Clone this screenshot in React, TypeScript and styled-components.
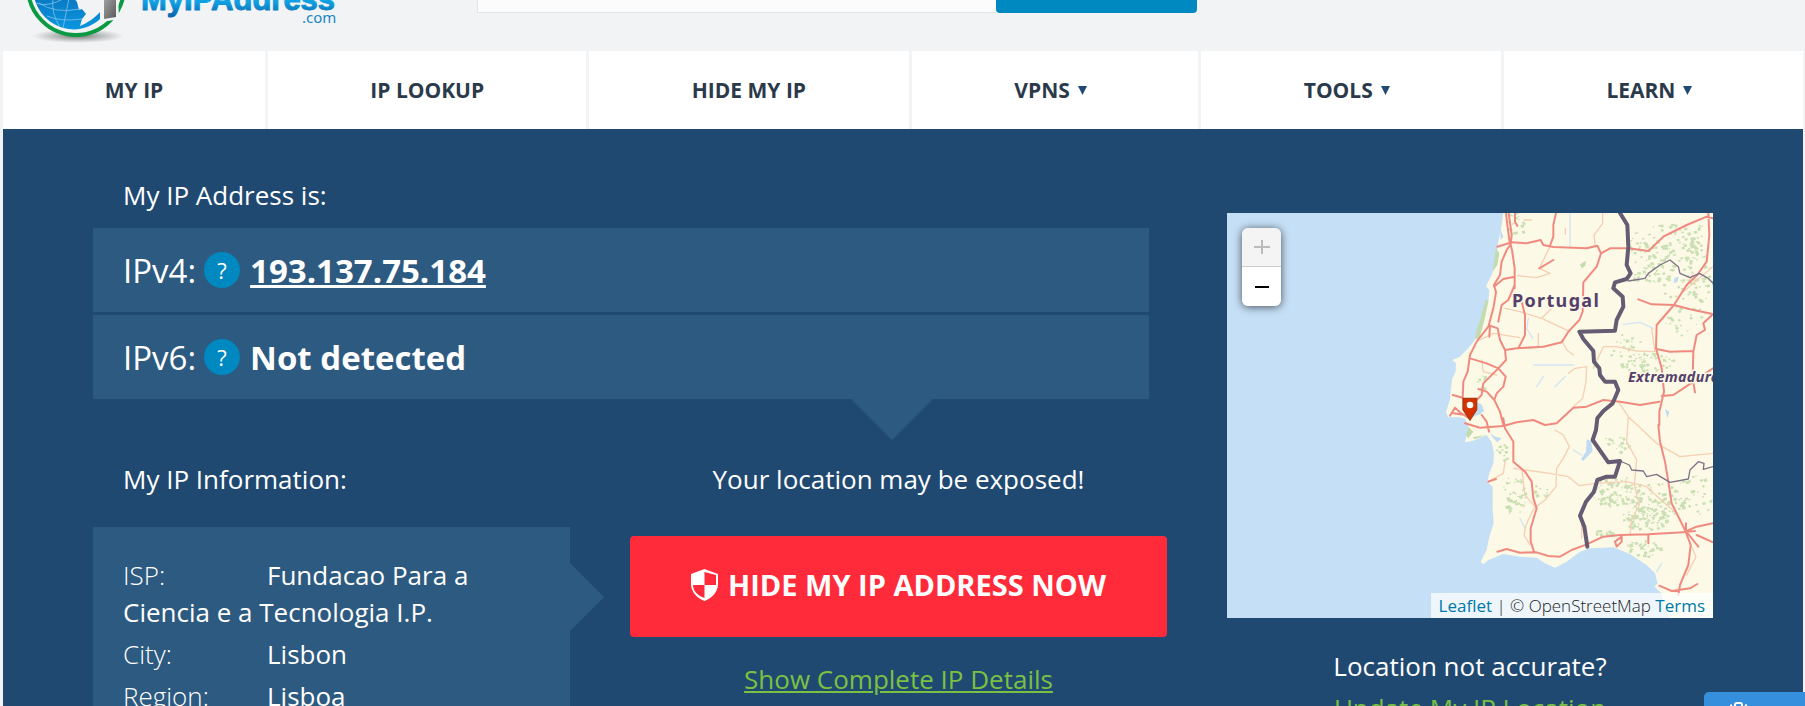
import React from 'react';
import styled, { createGlobalStyle } from 'styled-components';

const GlobalStyle = createGlobalStyle`
  *, *::before, *::after { box-sizing: border-box; }
  html, body { margin: 0; background: #f1f3f4; }
  body {
    font-family: 'Open Sans', 'Noto Sans', sans-serif;
    font-size: 26px;
    line-height: 37px;
    color: #fff;
  }
  h2, p, dl, dd, dt { margin: 0; font-weight: 400; font-size: inherit; }
`;

const Page = styled.div`
  padding: 0 2px 0 3px;
  overflow: hidden;
  height: 100vh;
`;

const Header = styled.header`
  display: flex;
  align-items: flex-start;
  height: 51px;
`;

const LogoLink = styled.a`
  display: block;
  flex: none;
  width: 340px;
  height: 51px;
  svg { display: block; }
`;

const SearchForm = styled.form`
  display: flex;
  width: 40%;
  margin-left: 134px;
`;

const SearchInput = styled.input`
  flex: 1;
  min-width: 0;
  height: 13px;
  padding: 0 16px;
  background: #fcfcfc;
  border: 1px solid #e2e4e6;
  border-width: 0 0 1px 1px;
  outline: none;
`;

const SearchButton = styled.button`
  width: 201px;
  height: 13px;
  border: 0;
  border-radius: 0 0 4px 4px;
  background: #0088c0;
`;

const Nav = styled.nav`
  display: grid;
  grid-template-columns: 262fr 318fr 319fr 286fr 300fr 299fr;
  gap: 3px;
`;

const NavLink = styled.a`
  display: flex;
  align-items: center;
  justify-content: center;
  height: 78px;
  background: #fff;
  color: #2b3a4b;
  font-size: 21px;
  font-weight: 700;
  text-decoration: none;
  svg { display: block; margin: 0 8px; }
`;

const Hero = styled.main`
  display: grid;
  grid-template-columns: 1074fr 486fr;
  column-gap: 60px;
  min-height: 640px;
  padding: 48px 5% 0;
  background: #204972;
`;

const Title = styled.h2`
  padding-left: 30px;
`;

const IpList = styled.div`
  position: relative;
  display: grid;
  gap: 3px;
  margin: 14px 18px 62px 0;
  &::after {
    content: '';
    position: absolute;
    top: 100%;
    right: 216px;
    border: 41px solid transparent;
    border-top-color: #2d5a80;
    border-bottom: 0;
  }
`;

const IpRow = styled.div`
  display: flex;
  align-items: center;
  height: 84px;
  padding-left: 30px;
  background: #2d5a80;
  font-size: 33px;
`;

const HelpButton = styled.button`
  width: 36px;
  height: 36px;
  margin: 0 10px 0 8px;
  padding: 0;
  border: 0;
  border-radius: 50%;
  background: #0088c0;
  color: #fff;
  font: 22px 'Open Sans', sans-serif;
`;

const IpLink = styled.a`
  color: #fff;
  font-weight: 700;
  text-decoration: underline;
`;

const Details = styled.div`
  display: grid;
  grid-template-columns: 477fr 537fr;
  column-gap: 60px;
`;

const InfoPanel = styled.dl`
  position: relative;
  margin-top: 29px;
  padding: 30px 60px 30px 30px;
  background: #2d5a80;
  &::after {
    content: '';
    position: absolute;
    top: 36px;
    left: 100%;
    border: 34px solid transparent;
    border-left-color: #2d5a80;
    border-right: 0;
  }
`;

const InfoItem = styled.div`
  margin-bottom: 5px;
  dt {
    display: inline-block;
    width: 144px;
    font-weight: 300;
  }
  dd { display: inline; }
`;

const Action = styled.div`
  display: flex;
  flex-direction: column;
  align-items: center;
`;

const HideButton = styled.button`
  display: flex;
  align-items: center;
  justify-content: center;
  gap: 10px;
  width: 100%;
  height: 101px;
  margin: 38px 0 24px;
  padding: 0 0 4px;
  border: 0;
  border-radius: 4px;
  background: #ff2a3a;
  color: #fff;
  font: 700 29px 'Open Sans', sans-serif;
  svg { display: block; }
`;

const GreenLink = styled.a`
  color: #7ac143;
  text-decoration: underline;
`;

const Aside = styled.aside`
  padding-top: 36px;
  text-align: center;
`;

const MapBox = styled.div`
  position: relative;
  margin-bottom: 27px;
  > svg { display: block; width: 100%; height: auto; }
`;

const ZoomControl = styled.div`
  position: absolute;
  top: 15px;
  left: 15px;
  border-radius: 6px;
  overflow: hidden;
  box-shadow: 0 1px 8px rgba(0, 0, 0, 0.65);
`;

const ZoomButton = styled.button<{ $off?: boolean }>`
  display: flex;
  align-items: center;
  justify-content: center;
  width: 39px;
  height: 39px;
  padding: 0;
  border: 0;
  border-bottom: ${(p) => (p.$off ? '1px solid #ccc' : '0')};
  background: ${(p) => (p.$off ? '#f4f4f4' : '#fff')};
  color: ${(p) => (p.$off ? '#bbb' : '#000')};
`;

const Attribution = styled.div`
  position: absolute;
  right: 0;
  bottom: 0;
  padding: 0 8px;
  background: rgba(255, 255, 255, 0.7);
  color: #222;
  font-size: 17px;
  font-weight: 300;
  line-height: 25px;
  a { color: #0078a8; font-weight: 400; text-decoration: none; }
`;

const LocationNote = styled.p`
  line-height: 42px;
`;

const CornerButton = styled.button`
  position: fixed;
  right: 0;
  bottom: 0;
  width: 101px;
  height: 14px;
  padding: 0 0 0 26px;
  border: 0;
  border-radius: 5px 0 0 0;
  background: #368fdd;
  overflow: hidden;
  svg { display: block; }
`;

const Logo = () => (
  <svg width="340" height="51" role="img" aria-label="MyIPAddress.com">
    <defs>
      <linearGradient id="word" x1="0" y1="-14" x2="0" y2="16" gradientUnits="userSpaceOnUse">
        <stop offset="0" stopColor="#12b5ee" />
        <stop offset="0.55" stopColor="#0f9fe0" />
        <stop offset="1" stopColor="#0a66ae" />
      </linearGradient>
      <linearGradient id="globe" x1="0" y1="0" x2="0" y2="1">
        <stop offset="0" stopColor="#0a78c2" />
        <stop offset="1" stopColor="#0a96e0" />
      </linearGradient>
      <linearGradient id="metal" x1="0" y1="0" x2="1" y2="1">
        <stop offset="0" stopColor="#a5a5a5" />
        <stop offset="1" stopColor="#5a5a5a" />
      </linearGradient>
      <radialGradient id="shade">
        <stop offset="0" stopColor="#555" stopOpacity="0.8" />
        <stop offset="1" stopColor="#777" stopOpacity="0" />
      </radialGradient>
    </defs>
    <ellipse cx="75" cy="36" rx="46" ry="7" fill="url(#shade)" />
    <circle cx="73" cy="-13" r="48" fill="#f1f3f4" stroke="#0b9a43" strokeWidth="4" />
    <path d="M31 -3 C35 14 49 27 66 29 C78 31 91 25 97 19 L97 12 C92 18 84 23 77 26 L79 19 L83 14 L79 9 L76 10 L74 2 L70 -3 Z" fill="url(#globe)" />
    <path d="M36 3 Q52 14 77 9 M44 16 Q57 22 79 19 M50 -2 Q48 14 57 27 M66 -2 Q63 14 60 28 M33 3 Q44 8 62 -2" fill="none" stroke="#7cc4ec" strokeWidth="0.8" />
    <path d="M99 -4 L115 -4 L116 19 L99 22 Z" fill="#f1f3f4" />
    <path d="M101 -4 L113 -4 L113 17 L101 19 Z" fill="url(#metal)" />
    <text x="138" y="10" fill="url(#word)" stroke="url(#word)" strokeLinejoin="round" fontFamily="'Liberation Sans', sans-serif" fontWeight="700" fontSize="31">
      MyIPAddress
    </text>
    <text x="299" y="23" fill="#1787c9" fontFamily="'Noto Sans', sans-serif" fontSize="15">
      .com
    </text>
  </svg>
);

const Caret = () => (
  <svg width="9" height="9" viewBox="0 0 9 9" aria-hidden="true">
    <path d="M0 0 H9 L4.500 9 Z" fill="#1f4a73" />
  </svg>
);

const Shield = () => (
  <svg width="27" height="32" viewBox="0 0 27 32" aria-hidden="true">
    <path
      fill="#fff"
      fillRule="evenodd"
      d="M13.500 0 L27 5 V15 C27 23 21 29 13.500 32 C6 29 0 23 0 15 V5 Z M13.500 3 V16 H25 V6 Z M2 16 C2 22 7 27 13.500 29 V16 Z"
    />
  </svg>
);

/* Scattered woodland patches: centre, radii and number of dots. */
const woods: number[][] = [
  [1330, 130, 110, 75, 130],
  [1440, 180, 40, 120, 50],
  [1290, 215, 60, 20, 25],
  [1400, 250, 80, 40, 25],
  [1280, 475, 80, 35, 60],
  [1210, 420, 60, 40, 20],
  [1190, 710, 40, 30, 20],
  [1190, 860, 80, 45, 90],
  [1310, 890, 80, 60, 90],
  [1270, 940, 70, 35, 70],
  [1270, 1030, 60, 25, 40],
  [1150, 985, 30, 15, 18],
  [1420, 870, 60, 60, 35],
  [880, 870, 35, 60, 45],
  [845, 740, 20, 30, 14],
  [885, 60, 25, 45, 22],
  [780, 530, 14, 25, 14],
  [960, 855, 30, 20, 10],
  [1390, 350, 80, 50, 25],
];

const buildDots = () => {
  let seed = 11;
  const next = () => {
    seed = (seed * 16807) % 2147483647;
    return seed / 2147483647;
  };
  return woods
    .map(([cx, cy, rx, ry, n]) =>
      Array.from({ length: n }, () => {
        const angle = next() * Math.PI * 2;
        const r = Math.sqrt(next());
        const x = Math.round(cx + Math.cos(angle) * r * rx);
        const y = Math.round(cy + Math.sin(angle) * r * ry);
        const s = Math.round(3 + next() * 7);
        return `M${x} ${y}l${s} ${-2}l${3} ${s - 2}l${-s} ${3}z`;
      }).join(''),
    )
    .join('');
};

const dots = buildDots();

const LAND =
  'M850 24 L845 60 L835 110 L828 160 L815 210 L798 243 L808 255 L805 290 L795 320 L785 350 L770 385 L765 405 L745 430 L720 455 L697 465 L708 475 L707 500 L697 520 L692 560 L690 585 L678 620 L685 637 L720 637 L735 642 L745 662 L740 690 L735 712 L760 707 L800 690 L815 712 L822 745 L820 775 L808 805 L802 830 L818 845 L818 915 L821 955 L808 995 L800 1035 L782 1070 L790 1078 L805 1065 L850 1047 L900 1055 L950 1058 L975 1075 L1005 1088 L1040 1070 L1080 1040 L1110 1030 L1180 1027 L1230 1047 L1280 1080 L1305 1105 L1313 1135 L1303 1145 L1325 1165 L1330 1205 L1350 1239 H1479 V24 Z';

const PortugalMap = () => (
  <svg viewBox="21 24 1458 1215" role="img" aria-label="Map of Portugal">
    <path d="M21 24 H1479 V1239 H21 Z" fill="#c5dff6" />
    <path d={LAND} fill="#fcfae6" />
    <path d={dots} fill="#cbdfb4" />
    <path
      d="M797 283 L805 290 L792 350 L778 400 L765 402 L770 375 L782 340 Z M828 130 L838 145 L832 180 L818 200 Z M745 665 L760 680 L745 700 L738 690 Z M1080 178 L1098 168 L1096 182 L1085 190 Z M795 690 L765 703 L758 697 Z"
      fill="#c3dbae"
    />
    <path
      d="M768 592 L785 598 L792 618 L780 628 L765 632 L752 640 L742 632 Z M1100 703 L1113 708 L1118 738 L1090 768 L1083 763 L1098 740 Z M810 683 L820 700 L832 712 L845 700 L826 695 Z M1335 612 L1348 620 L1342 640 Z M1365 218 L1376 215 L1372 232 L1360 233 Z M840 70 L850 95 L842 105 Z"
      fill="#c0dbf4"
    />
    <g fill="none" strokeLinejoin="round" strokeLinecap="round">
      <path
        d="M925 340 L920 370 L938 400 M970 515 L950 545 M1035 515 L1005 545 M1210 358 L1260 352 L1300 370 M1060 735 L1085 750 M900 940 L915 970 M1325 1075 L1310 1100 M1050 24 V130 M940 480 H1060"
        stroke="#d3e5f2"
        strokeWidth="4"
      />
      <path
        d="M1148 24 V55 L1122 90 L1125 118 M990 125 L958 190 L990 205 L950 218 L893 212 M1036 70 V88 M912 45 H935 M955 385 V425 M1025 405 L1040 435 L1060 450 M965 340 L1050 380 M965 340 L1000 305 M855 310 L900 320 L965 340 M1046 505 L1065 490 L1100 485 L1098 530 L1088 580 L1060 605 M785 465 L790 500 L830 510 M780 405 L820 385 L900 398 M1005 675 L1030 690 L1048 725 L1030 760 L1010 790 L1008 845 L975 885 L942 910 L918 960 L912 990 L930 1020 M880 770 L905 790 L915 870 L945 905 M880 790 L990 805 L1045 815 L1078 842 L1130 835 L1220 830 L1280 845 L1340 900 L1362 918 M855 770 L850 805 L805 830 M1195 590 L1225 635 L1310 715 L1380 755 L1479 745 M1225 635 L1220 710 L1250 765 L1243 840 L1258 900 L1235 945 L1230 990 M1120 490 L1150 425 L1190 425 L1250 438 L1305 440 M1420 205 L1390 260 L1479 185 M1305 440 L1295 370 M1085 950 L1085 1000 M1410 1015 L1428 1055 L1400 1110"
        stroke="#f6cfb4"
        strokeWidth="4"
      />
      <path
        d="M858 24 L862 60 L868 105 L876 135 L884 190 V250 M885 24 V50 L892 62 M866 24 L875 90 L872 118 L860 135 L845 170 L840 210 L822 240 L828 262 L820 310 L805 365 L770 410 L750 450 L743 500 L730 530 L728 580 M832 125 L876 112 L920 115 L962 105 L970 120 L1000 126 L1060 128 L1100 130 L1132 122 L1143 145 L1130 185 L1090 232 L1088 320 L1078 345 L1045 380 L1025 412 L970 425 L890 430 L855 435 L840 405 L833 370 L810 362 L808 395 M1008 24 L1000 60 V95 L990 122 M958 190 L1000 165 M1143 145 L1170 130 L1225 130 L1285 138 L1330 95 L1400 60 L1460 35 L1479 40 M1465 24 L1468 90 L1460 170 L1432 210 L1400 240 L1362 300 L1310 360 L1308 430 L1325 490 L1332 560 L1318 620 V660 M1255 283 L1295 298 L1362 300 L1410 313 L1479 327 L1450 355 L1455 375 L1430 390 L1420 440 L1418 520 L1425 562 M1310 432 L1350 440 L1420 438 M1325 573 L1360 570 L1390 550 L1479 490 M884 215 L850 222 L822 245 M884 240 L865 285 L845 300 L835 350 M905 290 L915 330 L915 390 L895 430 M855 435 L858 465 L835 490 L790 535 L785 570 L765 590 M750 460 L800 475 L835 490 L857 515 L850 545 L830 565 L823 585 L800 560 L775 552 M698 570 L728 578 M823 585 L840 620 L850 660 M690 632 L705 608 L720 622 L748 640 M700 625 L735 630 M785 630 L800 650 L807 680 M735 655 L780 668 L850 663 L890 652 L940 645 L975 660 L1010 655 L1060 608 L1100 605 L1150 585 L1200 590 L1260 600 L1318 590 M850 640 L855 670 L880 710 V770 L915 800 L935 830 L940 880 L950 910 L932 970 V1010 L942 1040 M832 1040 L860 1032 L900 1043 L950 1042 L985 1053 L1020 1055 L1055 1035 L1100 1018 L1150 995 L1200 990 L1285 988 L1390 982 L1430 965 L1479 955 M1285 988 V1015 M1205 995 L1185 1010 L1190 1025 L1205 1010 V990 M1315 660 L1320 710 L1335 770 L1345 830 L1355 895 L1395 975 L1412 1020 L1405 1080 L1380 1140 L1375 1170 M1395 975 L1435 1025 M1430 990 L1479 1012 M1318 1142 L1355 1158 L1410 1150 L1432 1137 M805 830 L828 822 M1398 955 V980 L1425 978"
        stroke="#f08a80"
        strokeWidth="6"
      />
      <path
        d="M1225 228 L1275 220 L1285 205 L1320 180 L1350 165 L1375 185 L1380 205 L1410 218 L1438 205 L1465 220 L1479 235 M1200 768 L1228 780 L1235 795 L1270 798 L1280 815 L1310 808 L1350 832 L1405 822 L1410 795 L1435 770 L1452 775 L1450 793 L1479 785"
        stroke="#7d7287"
        strokeWidth="4"
      />
      <path
        d="M1200 24 L1222 60 L1225 125 L1220 180 L1232 205 L1220 222 L1185 232 L1180 250 L1208 275 L1210 305 L1190 345 L1185 377 L1078 380 L1090 402 L1120 438 L1122 470 L1138 490 L1140 510 L1155 530 L1185 530 L1195 555 L1178 595 L1150 618 L1132 640 L1128 675 L1118 705 L1165 772 L1200 768 L1185 815 L1160 815 L1132 825 L1122 860 L1098 890 L1080 932 L1093 965 L1102 1025"
        stroke="#655b72"
        strokeWidth="12"
      />
    </g>
    <g fontFamily="'Noto Sans', sans-serif" fontWeight="700" fill="#55406b" stroke="#fcfae6" strokeWidth="9" paintOrder="stroke" strokeLinejoin="round">
      <text x="876" y="307" fontSize="54" letterSpacing="4">Portugal</text>
      <text x="1224" y="531" fontSize="43" fontStyle="italic" letterSpacing="1">Extremadura</text>
    </g>
    <path d="M729 580 H770 V614 L750 645 L729 614 Z" fill="#d63200" stroke="#a83a10" strokeWidth="4" />
    <circle cx="750" cy="600" r="10" fill="#fff" />
  </svg>
);

const navItems = [
  { label: 'MY IP' },
  { label: 'IP LOOKUP' },
  { label: 'HIDE MY IP' },
  { label: 'VPNS', menu: true },
  { label: 'TOOLS', menu: true },
  { label: 'LEARN', menu: true },
];

const info = [
  ['ISP:', 'Fundacao Para a Ciencia e a Tecnologia I.P.'],
  ['City:', 'Lisbon'],
  ['Region:', 'Lisboa'],
];

export default function App() {
  return (
    <Page>
      <GlobalStyle />
      <Header>
        <LogoLink href="#"><Logo /></LogoLink>
        <SearchForm>
          <SearchInput type="text" aria-label="Search" />
          <SearchButton type="button" aria-label="Search" />
        </SearchForm>
      </Header>
      <Nav>
        {navItems.map((item) => (
          <NavLink href="#" key={item.label}>
            {item.label}
            {item.menu && <Caret />}
          </NavLink>
        ))}
      </Nav>
      <Hero>
        <div>
          <Title>My IP Address is:</Title>
          <IpList>
            <IpRow>
              IPv4:
              <HelpButton type="button">?</HelpButton>
              <IpLink href="#">193.137.75.184</IpLink>
            </IpRow>
            <IpRow>
              IPv6:
              <HelpButton type="button">?</HelpButton>
              <strong>Not detected</strong>
            </IpRow>
          </IpList>
          <Details>
            <section>
              <Title>My IP Information:</Title>
              <InfoPanel>
                {info.map(([name, value]) => (
                  <InfoItem key={name}>
                    <dt>{name}</dt>
                    <dd>{value}</dd>
                  </InfoItem>
                ))}
              </InfoPanel>
            </section>
            <Action>
              <p>Your location may be exposed!</p>
              <HideButton type="button">
                <Shield />
                HIDE MY IP ADDRESS NOW
              </HideButton>
              <GreenLink href="#">Show Complete IP Details</GreenLink>
            </Action>
          </Details>
        </div>
        <Aside>
          <MapBox>
            <PortugalMap />
            <ZoomControl>
              <ZoomButton type="button" aria-label="Zoom in" $off>
                <svg width="16" height="16" viewBox="0 0 16 16"><path d="M8 1V15M0 8H16" stroke="currentColor" strokeWidth="2" /></svg>
              </ZoomButton>
              <ZoomButton type="button" aria-label="Zoom out">
                <svg width="14" height="2" viewBox="0 0 14 2"><path d="M0 1H14" stroke="currentColor" strokeWidth="2" /></svg>
              </ZoomButton>
            </ZoomControl>
            <Attribution>
              <a href="#">Leaflet</a> | © OpenStreetMap <a href="#">Terms</a>
            </Attribution>
          </MapBox>
          <LocationNote>Location not accurate?</LocationNote>
          <LocationNote><GreenLink href="#">Update My IP Location</GreenLink></LocationNote>
        </Aside>
      </Hero>
      <CornerButton type="button" aria-label="Notifications">
        <svg width="18" height="14" viewBox="0 0 18 14">
          <path d="M5 14 V13 Q5 11 7 11 H10 Q12 11 12 13 V14 M0 14 L2 13 M17 14 L15 13" fill="none" stroke="#fff" strokeWidth="2" />
        </svg>
      </CornerButton>
    </Page>
  );
}
